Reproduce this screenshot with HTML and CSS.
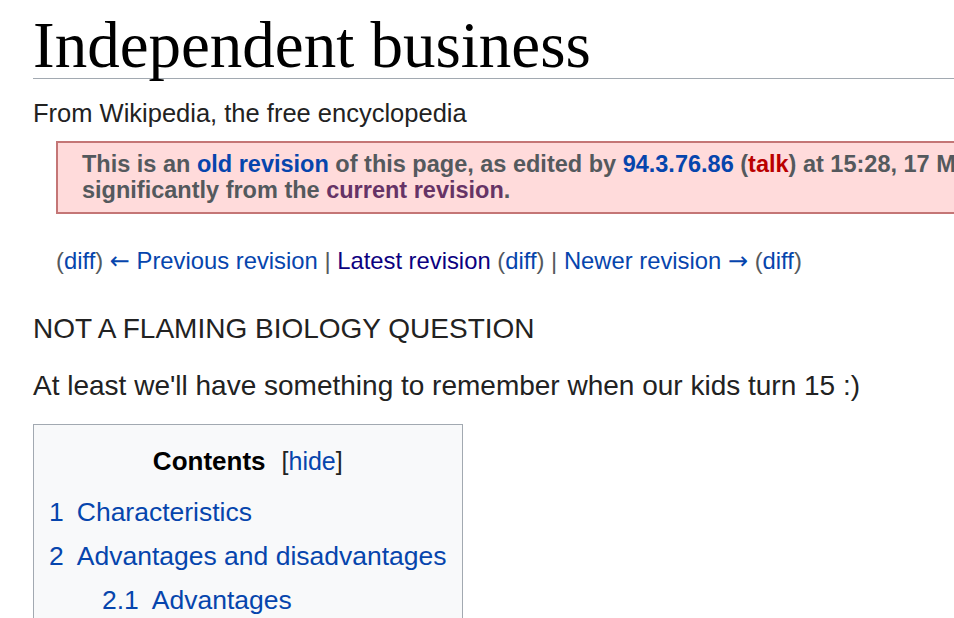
FILE: index.html
```html
<html>
	<head>
	<meta charset="utf-8"/>
		<link rel="stylesheet" href="styles.css">
	</head>
	<body>
		<div class="page">
			<h1 class="title">Independent business</h1>
			<div class="sitesub">From Wikipedia, the free encyclopedia</div>

			<div class="notice">This is an <a href="#">old revision</a> of this page, as edited by <a href="#">94.3.76.86</a> (<a href="#" class="new">talk</a>) at 15:28, 17 March 2009. The present address (URL) is a permanent link to this revision, which may differ<br>significantly from the <a href="#" class="seen">current revision</a>.</div>

			<div class="revnav">
				<span class="par">(</span><a href="#">diff</a><span class="par">)</span> <a href="#"><span class="arrow">←</span> Previous revision</a> <span class="sep">|</span> <a href="#" class="latest">Latest revision</a> <span class="par">(</span><a href="#">diff</a><span class="par">)</span> <span class="sep">|</span> <a href="#">Newer revision <span class="arrow">→</span></a> <span class="par">(</span><a href="#">diff</a><span class="par">)</span>
			</div>

			<p class="first">NOT A FLAMING BIOLOGY QUESTION</p>
			<p class="second">At least we'll have something to remember when our kids turn 15 :)</p>

			<div class="toc">
				<div class="toctitle">
					<span class="tochead">Contents</span><span class="toggle">[<a href="#">hide</a>]</span>
				</div>
				<ul class="toclist">
					<li><a href="#"><span class="num">1</span>Characteristics</a></li>
					<li><a href="#"><span class="num">2</span>Advantages and disadvantages</a>
						<ul class="sub">
							<li><a href="#"><span class="num">2.1</span>Advantages</a></li>
							<li><a href="#"><span class="num">2.2</span>Disadvantages</a></li>
						</ul>
					</li>
				</ul>
			</div>
		</div>
	</body>
</html>
```

FILE: styles.css
```css
html, body{
	margin: 0;
	overflow: hidden;
	background: #fff;
}
body{
	font-family: "Liberation Sans", Arial, sans-serif;
	color: #222;
}
a{
	color: #0645ad;
	text-decoration: none;
}
.page{
	width: 1600px;
	padding-left: 33px;
}
.title{
	margin: 0;
	padding-top: 12px;
	font-family: "Liberation Serif", "Times New Roman", serif;
	font-weight: normal;
	font-size: 65px;
	line-height: 66px;
	color: #000;
	border-bottom: 1px solid #a2a9b1;
}
.sitesub{
	margin-top: 19px;
	font-size: 25.5px;
	line-height: 30px;
}
.notice{
	margin: 13px 0 0 23px;
	padding: 8px 24px 9px;
	border: 2px solid #c47676;
	background: #ffdbdb;
	color: #54595d;
	font-weight: bold;
	font-size: 23.5px;
	line-height: 26px;
	white-space: nowrap;
}
.notice .new{color: #ba0000;}
.notice .seen{color: #663366;}

.revnav{
	margin: 34px 0 0 23px;
	font-size: 23.8px;
	line-height: 26px;
}
.revnav .par, .revnav .sep{color: #54595d;}
.revnav .latest{color: #0b0080;}
.arrow{
	font-family: "DejaVu Sans", sans-serif;
	font-size: 24px;
}

p{
	margin: 0;
	font-size: 28px;
	line-height: 32px;
}
.first{margin-top: 39px;}
.second{margin-top: 25px;}

.toc{
	display: inline-block;
	margin-top: 22px;
	padding: 20px 15px 20px;
	border: 1px solid #a2a9b1;
	background: #f8f9fa;
}
.toctitle{
	text-align: center;
	line-height: 32px;
}
.tochead{
	font-weight: bold;
	font-size: 26px;
	color: #000;
}
.toggle{
	margin-left: 16px;
	font-size: 25px;
	color: #222;
}
.toclist, .sub{
	list-style: none;
	margin: 0;
	padding: 0;
}
.toclist{margin-top: 13px;}
.toclist li{
	font-size: 26.5px;
	line-height: 44px;
}
.sub{margin-left: 53px;}
.num{
	padding-right: 13px;
	color: #0645ad;
}
```
